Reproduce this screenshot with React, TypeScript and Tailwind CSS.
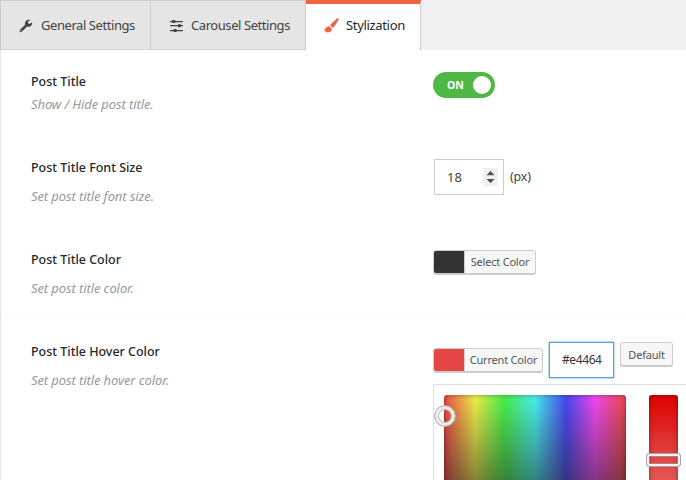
import type { ReactNode } from "react";

const WrenchIcon = () => (
  <svg width="14" height="14" viewBox="0 0 14 14" fill="#444">
    <path fillRule="evenodd" d="M13.100 3.200c.5 2.500-1.300 4.600-3.700 4.600-.5 0-1-.1-1.400-.3L2.900 12.700c-.6.6-1.400.6-1.900 0-.6-.5-.6-1.300 0-1.900L6.200 5.800C5.400 3.400 7 .9 9.500.7c.7-.1 1.400.1 1.900.4L9.100 2.500v1.700l1.500.9zM2.100 11.100a.55.55 0 1 0 0 1.100.55.55 0 0 0 0-1.100z" />
  </svg>
);

const BrushIcon = () => (
  <svg width="15" height="15" viewBox="0 0 15 15" fill="#ee6443">
    <path d="M14.300.4c.6.400.6 1 .2 1.700L10.700 8c-.6.900-1.200 1.400-2 1.700L6.200 7.500c.1-.8.5-1.400 1.200-2L12.700.7c.5-.5 1.100-.6 1.600-.3z" />
    <path d="M5.200 8.200 8 10.600c0 2.300-1.600 3.900-3.900 3.900-2.400 0-3.700-1.400-4-4.200.6.400 1.100.6 1.500.5C2 9.100 3.400 8.200 5.200 8.200z" />
  </svg>
);

const SlidersIcon = () => (
  <svg width="13" height="13" viewBox="0 0 13 13" fill="#444">
    <path d="M0 1h13v1.300H0zM0 5h13v1.300H0zM0 10h13v1.200H0z" />
    <path d="M2.300 0h3v3h-3zM8 4.200h3v3H8zM3.600 9h3v3h-3z" />
  </svg>
);

function Row({ title, text, gap, tall, children }: {
  title: string;
  text: string;
  gap: string;
  tall: string;
  children: ReactNode;
}) {
  return (
    <section className={`flex shrink-0 pl-[30px] ${tall}`}>
      <div className="w-[402px] shrink-0 pt-[22px] whitespace-nowrap">
        <h4 className="text-[12.5px] leading-5 font-medium tracking-[-0.02px] text-[#23282d]">{title}</h4>
        <p className={`text-[13px] leading-5 tracking-[-0.1px] text-[#999] italic ${gap}`}>{text}</p>
      </div>
      {children}
    </section>
  );
}

function ColorButton({ swatch, label, width }: { swatch: string; label: string; width: string }) {
  return (
    <button className={`flex h-[24px] shrink-0 overflow-hidden rounded-[3px] border border-[#ccc] bg-[#f7f7f7] shadow-[0_1px_0_#ccc] ${width}`}>
      <span className={`h-full w-[30px] shrink-0 ${swatch}`} />
      <span className="h-full flex-1 border-l border-[#ccc] text-center text-[11px] leading-[22px] tracking-[-0.2px] whitespace-nowrap text-[#555]">{label}</span>
    </button>
  );
}

export default function App() {
  return (
    <div className="flex h-[480px] w-[686px] flex-col overflow-hidden bg-white font-['Noto_Sans','Open_Sans',sans-serif]">
      <nav className="flex h-[50px] shrink-0 bg-[#f0f0f0] text-[13px] whitespace-nowrap text-[#444]">
        <div className="flex w-[151px] items-center border border-[#ccc] border-b-[#d5d5d5] bg-[#e5e5e5] pt-[2px] pl-[18px]">
          <span className="mr-[8px] shrink-0"><WrenchIcon /></span>
          <span className="tracking-[-0.43px]">General Settings</span>
        </div>
        <div className="flex w-[155px] items-center border-y border-r border-[#ccc] border-b-[#d5d5d5] bg-[#e5e5e5] pt-[2px] pl-[19px]">
          <span className="mr-[8px] shrink-0"><SlidersIcon /></span>
          <span className="tracking-[-0.43px]">Carousel Settings</span>
        </div>
        <div className="flex w-[115px] items-center border-t-4 border-r border-t-[#ee6443] border-r-[#ccc] bg-white pb-[3px] pl-[18px] text-[#23282d]">
          <span className="mr-[7px] shrink-0"><BrushIcon /></span>
          <span className="tracking-[-0.33px]">Stylization</span>
        </div>
      </nav>

      <main className="flex min-h-0 flex-1 flex-col border-l border-[#e5e5e5]">
        <Row title="Post Title" text="Show / Hide post title." gap="mt-[2px]" tall="h-[86px]">
          <button className="mt-[22px] flex h-[26px] w-[62px] items-center justify-between rounded-full bg-[#4fb845] pr-1 pl-[14px]">
            <span className="pt-px text-[10.5px] font-bold text-white">ON</span>
            <span className="size-[18px] rounded-full bg-white" />
          </button>
        </Row>

        <Row title="Post Title Font Size" text="Set post title font size." gap="mt-[8px]" tall="h-[92px]">
          <div className="mt-[23px] ml-px flex h-9 w-[70px] items-center justify-between border border-[#ccc] pr-[5px] pl-3 text-[13px] text-[#444]">
            <span className="pt-px">18</span>
            <svg width="15" height="18" viewBox="0 0 15 18">
              <path fill="#f0f0f0" d="M0 0h15v18H0z" />
              <path fill="#505050" d="M7.500 3 11.500 7.200h-8zM3.500 11h8l-4 4.200z" />
            </svg>
          </div>
          <span className="mt-[31px] ml-[6px] text-[12.5px] leading-5 tracking-[-0.2px] text-[#444]">(px)</span>
        </Row>

        <Row title="Post Title Color" text="Set post title color." gap="mt-[8px]" tall="h-[92px] border-b border-[#fcfcfc]">
          <div className="pt-[22px]">
            <ColorButton swatch="bg-[#333]" label="Select Color" width="w-[103px]" />
          </div>
        </Row>

        <Row title="Post Title Hover Color" text="Set post title hover color." gap="mt-[8px]" tall="h-[161px]">
          <div className="flex w-[253px] shrink-0 flex-col pt-[22px]">
            <div className="flex h-[42px] shrink-0 items-start">
              <div className="pt-[6px]">
                <ColorButton swatch="bg-[#e44646]" label="Current Color" width="w-[110px]" />
              </div>
              <div className="ml-[6px] h-[36px] w-[65px] border border-[#5b9dd9] pl-3 text-[12px] leading-[34px] tracking-[-0.4px] text-[#32373c] shadow-[0_0_2px_rgba(30,140,190,.8)]">#e4464</div>
              <button className="ml-[6px] h-[24px] w-[53px] rounded-[3px] border border-[#ccc] bg-[#f7f7f7] text-[11px] leading-[21px] tracking-[-0.2px] text-[#555] shadow-[0_1px_0_#ccc]">Default</button>
            </div>
            <div className="flex flex-1 border-t border-l border-[#dfdfdf] pt-[10px] pl-[10px]">
              <div className="relative h-[182px] w-[182px] shrink-0 rounded-[3px] bg-[linear-gradient(to_bottom,transparent_0%,#222_90%),linear-gradient(to_right,#f04848,#f0f048_17%,#48f048_33%,#48f0f0_50%,#4848f0_67%,#f048f0_83%,#f04848)] shadow-[inset_0_0_5px_rgba(0,0,0,.4)]">
                <span className="absolute top-[10px] left-[-10px] size-[22px] rounded-full border border-[#b0b0b0] shadow-[inset_0_0_0_3px_#ececec,inset_0_0_0_4px_#c4bcbc]" />
              </div>
              <div className="relative ml-[23px] h-[182px] w-[29px] shrink-0 rounded-[3px] bg-[linear-gradient(to_bottom,#df0000,#e14646_35%,#e37272_65%,#e5e5e5)] shadow-[inset_0_0_5px_rgba(0,0,0,.4)]">
                <span className="absolute top-[58px] left-[-3px] h-[14px] w-[35px] rounded-[3px] border border-[#b0a0a0] shadow-[inset_0_0_0_2px_#f4f4f4,inset_0_0_0_3px_#b08080]" />
              </div>
            </div>
          </div>
        </Row>
      </main>
    </div>
  );
}
